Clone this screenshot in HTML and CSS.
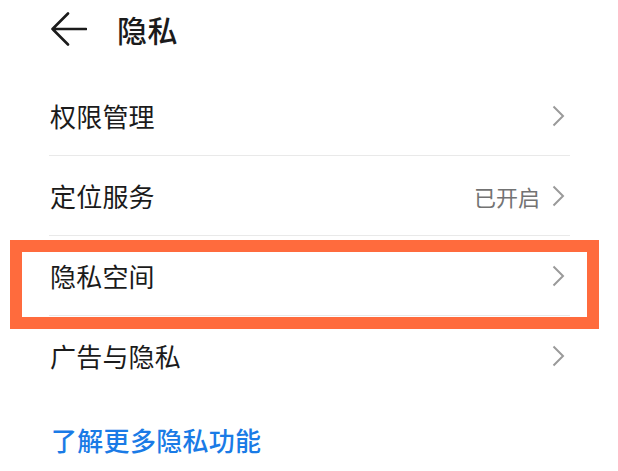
FILE: index.html
```html
<!DOCTYPE html>
<html lang="zh-CN">
<head>
<meta charset="utf-8">
<title>隐私</title>
<link rel="stylesheet" href="styles.css">
</head>
<body>
<div class="page">
  <header class="header">
    <svg class="back" width="36" height="34" viewBox="0 0 36 34">
      <path d="M17 1.5 L1.5 17 L17 32.5 M1.5 17 H35" fill="none" stroke="#1b1b1b" stroke-width="2.6" stroke-linecap="round" stroke-linejoin="round"/>
    </svg>
    <h1 class="title">隐私</h1>
  </header>
  <div class="list">
    <div class="row">
      <span class="label">权限管理</span>
      <span class="right">
        <svg class="chev" width="13" height="22" viewBox="0 0 13 22"><path d="M1.5 1.5 L11 11 L1.5 20.5" fill="none" stroke="#9a9a9a" stroke-width="2"/></svg>
      </span>
    </div>
    <div class="row">
      <span class="label">定位服务</span>
      <span class="right">
        <span class="value">已开启</span>
        <svg class="chev" width="13" height="22" viewBox="0 0 13 22"><path d="M1.5 1.5 L11 11 L1.5 20.5" fill="none" stroke="#9a9a9a" stroke-width="2"/></svg>
      </span>
    </div>
    <div class="row">
      <span class="label">隐私空间</span>
      <span class="right">
        <svg class="chev" width="13" height="22" viewBox="0 0 13 22"><path d="M1.5 1.5 L11 11 L1.5 20.5" fill="none" stroke="#9a9a9a" stroke-width="2"/></svg>
      </span>
    </div>
    <div class="row last">
      <span class="label">广告与隐私</span>
      <span class="right">
        <svg class="chev" width="13" height="22" viewBox="0 0 13 22"><path d="M1.5 1.5 L11 11 L1.5 20.5" fill="none" stroke="#9a9a9a" stroke-width="2"/></svg>
      </span>
    </div>
    <div class="highlight"></div>
  </div>
  <a class="more">了解更多隐私功能</a>
</div>
</body>
</html>
```
FILE: styles.css
```css
* { box-sizing: border-box; }
html, body {
  margin: 0;
  padding: 0;
  background: #ffffff;
}
body {
  font-family: "Noto Sans CJK SC", "Noto Sans", sans-serif;
  color: #1b1b1b;
  width: 618px;
  height: 471px;
  overflow: hidden;
}
.page {
  position: relative;
}
.header {
  height: 76px;
  display: flex;
  align-items: center;
  padding-left: 51px;
  padding-bottom: 18px;
  gap: 30px;
}
.back { display: block; }
.title {
  margin: 0;
  font-size: 30px;
  font-weight: 500;
  line-height: 40px;
  letter-spacing: 0.5px;
}
.list {
  margin: 0 48px 0 49px;
}
.row {
  height: 80px;
  border-bottom: 1px solid #e9e9e9;
  display: flex;
  align-items: center;
  justify-content: space-between;
  padding: 0 5px 0 1px;
}
.row.last { border-bottom: none; }
.label {
  font-size: 26px;
  line-height: 34px;
  letter-spacing: 0.2px;
}
.right {
  display: flex;
  align-items: center;
  gap: 12px;
}
.value {
  font-size: 22px;
  color: #737373;
  line-height: 30px;
}
.chev { display: block; }
.highlight {
  position: absolute;
  left: 10px;
  top: 240px;
  width: 589px;
  height: 89px;
  border: 12px solid #ff6b3d;
  pointer-events: none;
}
.more {
  display: block;
  margin: 29px 0 0 51px;
  font-size: 26px;
  font-weight: 500;
  line-height: 30px;
  color: #1a7be6;
  letter-spacing: 0.3px;
}
```
